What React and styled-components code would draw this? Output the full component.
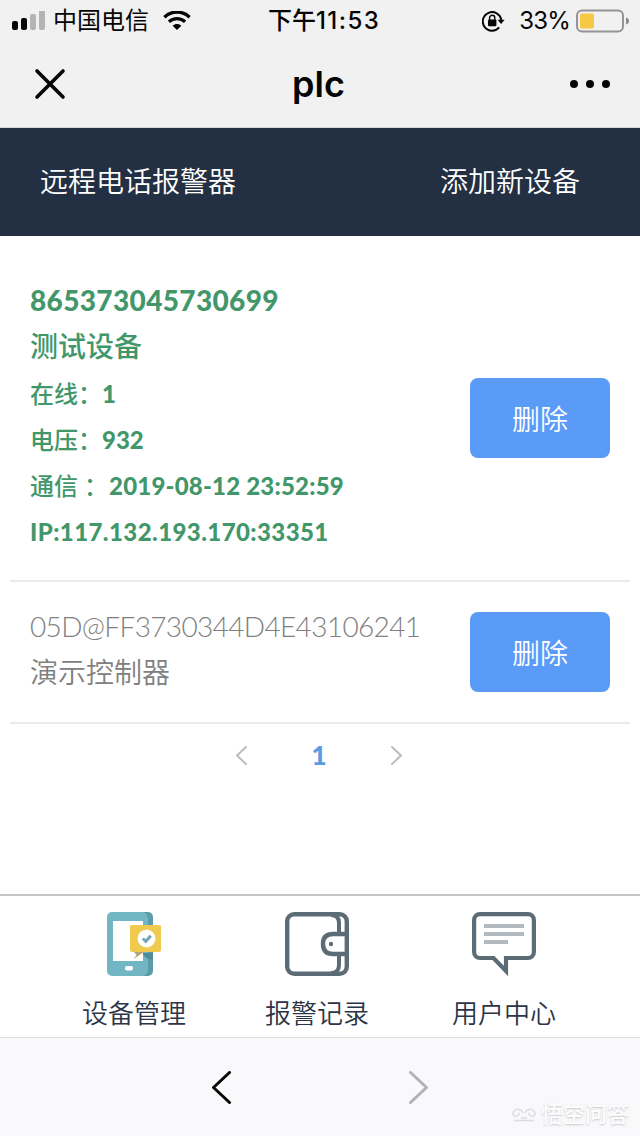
import React from 'react';
import styled, { createGlobalStyle } from 'styled-components'

const GlobalStyle = createGlobalStyle`
*{
  box-sizing: border-box;
}
body{
  margin: 0;
  background-color: #fff;
  font-family: Lato, "Noto Sans CJK SC", sans-serif;
}
`
const Page = styled.div`
width: 640px;
height: 1136px;
display: flex;
flex-direction: column;
background-color: #fff;
overflow: hidden;
position: relative;
`
const Header = styled.header`
height: 128px;
background-color: #f1f1f1;
border-bottom: 1px solid #d5d5d6;
color: #050505;
font-family: Inter, "Noto Sans CJK SC", sans-serif;
`
const StatusBar = styled.div`
height: 41px;
display: grid;
grid-template-columns: 256px 112px 1fr;
align-items: center;
padding: 1px 11px 0 12px;
font-size: 24px;
line-height: 40px;
`
const StatusSide = styled.div`
display: flex;
align-items: center;
justify-content: ${props => props.$end ? 'flex-end' : 'flex-start'};
`
const Carrier = styled.span`
margin: 0 14px 0 8px;
`
const Clock = styled.span`
font-weight: 500;
white-space: nowrap;
letter-spacing: ${props => props.$digits ? '1.4px' : '0'};
`
const Percent = styled.span`
margin: 0 6px 0 14px;
letter-spacing: -0.8px;
`
const TitleBar = styled.div`
height: 86px;
display: grid;
grid-template-columns: 1fr auto 1fr;
align-items: center;
padding: 0 29px 0 34px;
`
const Title = styled.h1`
margin: 0;
font-size: 36px;
font-weight: 600;
line-height: 86px;
padding-right: 8px;
`
const Dots = styled.svg`
justify-self: end;
`
const Nav = styled.nav`
height: 108px;
flex: none;
display: flex;
justify-content: space-between;
align-items: center;
padding: 0 60px 2px 40px;
background-color: #232f42;
color: #fff;
font-size: 28px;
font-weight: 350;
`
const NavItem = styled.span`
line-height: 40px;
`
const List = styled.main`
padding: 20px 10px 0;
flex: 1;
`
const Row = styled.div`
display: flex;
justify-content: space-between;
align-items: center;
height: ${props => props.$tall ? '326px' : '142px'};
padding: 0 20px;
border-bottom: 2px solid #ebebeb;
`
const Info = styled.div`
color: ${props => props.$online ? '#42976a' : '#808080'};
font-weight: ${props => props.$online ? 900 : 350};
padding-bottom: ${props => props.$online ? '4px' : '6px'};
`
const Line = styled.div`
height: 46px;
line-height: ${props => props.$small ? '48px' : props.$high ? '44px' : '46px'};
font-size: ${props => props.$small ? '24px' : '28px'};
letter-spacing: ${props => props.$track || '0'};
white-space: pre;
`
const Label = styled.span`
font-weight: 500;
letter-spacing: 0;
margin-right: ${props => props.$gap ? '1px' : '0'};
`
const DeleteButton = styled.button`
width: 140px;
height: 80px;
border: none;
border-radius: 8px;
background-color: #5b9bf8;
color: #fff;
font-family: inherit;
font-size: 28px;
font-weight: 350;
padding: 0 0 1px;
`
const Pager = styled.div`
display: flex;
justify-content: center;
align-items: center;
height: 62px;
padding-right: 2px;
gap: 64px;
`
const PageNumber = styled.span`
color: #5c9ae4;
font-size: 26px;
font-weight: 900;
`
const TabBar = styled.footer`
height: 143px;
flex: none;
display: grid;
grid-template-columns: 184px 182px 192px;
padding: 16px 0 0 42px;
border-top: 2px solid #c6c6c6;
`
const Tab = styled.div`
display: flex;
flex-direction: column;
align-items: center;
color: #2c3547;
font-size: 26px;
font-weight: 350;
line-height: 36px;
gap: 19px;
`
const BrowserBar = styled.div`
height: 99px;
flex: none;
display: flex;
justify-content: center;
align-items: center;
gap: 178px;
border-top: 1px solid #dededf;
background-color: #f9f9fb;
`
const Watermark = styled.div`
position: absolute;
right: 11px;
bottom: 6px;
display: flex;
align-items: center;
gap: 4px;
color: #fdfdfe;
font-size: 22px;
line-height: 32px;
font-weight: 500;
text-shadow: 0 1px 2px #c8c8cb;
`

const Chevron = ({ width, height, stroke, color, right }) => (
  <svg width={width} height={height} viewBox={`0 0 ${width} ${height}`} fill="none" stroke={color} strokeWidth={stroke} strokeLinecap="round" strokeLinejoin="round">
    <path d={right
      ? `M${stroke / 2} ${stroke / 2}L${width - stroke / 2} ${height / 2}L${stroke / 2} ${height - stroke / 2}`
      : `M${width - stroke / 2} ${stroke / 2}L${stroke / 2} ${height / 2}L${width - stroke / 2} ${height - stroke / 2}`} />
  </svg>
)

const SignalIcon = () => (
  <svg width="33" height="20" viewBox="0 0 33 20">
    <rect x="0" y="10" width="6" height="9" rx="2" fill="#050505" />
    <rect x="9" y="7" width="6" height="12" rx="2" fill="#050505" />
    <rect x="18" y="3" width="6" height="16" rx="2" fill="#b4b4b4" />
    <rect x="27" y="-1" width="6" height="20" rx="2" fill="#b4b4b4" />
  </svg>
)

const WifiIcon = () => (
  <svg width="28" height="20" viewBox="0 1 28 20">
    <path d="M1.4 7.2C8.6 .4 19.4 .4 26.6 7.2" fill="none" stroke="#050505" strokeWidth="3.4" />
    <path d="M5.9 11.7C10.5 7.5 17.5 7.5 22.1 11.7" fill="none" stroke="#050505" strokeWidth="3.2" />
    <path d="M9.6 15.8C12.2 13.4 15.8 13.4 18.4 15.8L14 20Z" fill="#050505" />
  </svg>
)

const LockIcon = () => (
  <svg width="23" height="22" viewBox="0 0 23 22">
    <path d="M17.2 17.4A9.300 9.300 0 1 1 19.300 10" fill="none" stroke="#050505" strokeWidth="1.900" />
    <path d="M15.6 9.8H22.6L19.1 14Z" fill="#050505" />
    <rect x="6" y="9.4" width="8.4" height="6.8" rx="1" fill="#050505" />
    <path d="M7.6 10V7.8A2.6 2.6 0 0 1 12.8 7.8V10" fill="none" stroke="#050505" strokeWidth="1.4" />
  </svg>
)

const BatteryIcon = () => (
  <svg width="53" height="24" viewBox="0 0 53 24">
    <rect x="1" y="1.5" width="46" height="21" rx="5" fill="none" stroke="#949494" strokeWidth="2" />
    <rect x="4" y="4.5" width="14" height="15" rx="1.5" fill="#f6c844" />
    <path d="M50 8.5C52 9 53 10.2 53 12S52 15 50 15.5Z" fill="#8c8c8c" />
  </svg>
)

const DeviceIcon = () => (
  <svg width="64" height="64" viewBox="0 0 64 64">
    <path d="M40 0H46A5 5 0 0 1 51 5V59A5 5 0 0 1 46 64H40Z" fill="#5b9caa" />
    <path d="M10 0H40Q46 1 46 7V57Q46 63 40 64H10A5 5 0 0 1 5 59V5A5 5 0 0 1 10 0Z" fill="#72b6c3" />
    <rect x="11" y="9" width="30" height="40" fill="#fff" />
    <path d="M41 41H51V48Q44 47 41 43Z" fill="#4f8b99" />
    <rect x="23" y="54" width="8" height="4.4" rx="2" fill="#fff" />
    <path d="M32 40L34.500 43L31.500 47L42 40Z" fill="#b0a77e" />
    <rect x="28" y="13" width="31" height="27" rx="2" fill="#efca4e" />
    <circle cx="44.500" cy="26.500" r="9" fill="#fff" />
    <path d="M40.800 26.500L43.800 29.300L48.800 23.800" fill="none" stroke="#72a5ba" strokeWidth="3" />
  </svg>
)

const WalletIcon = () => (
  <svg width="64" height="64" viewBox="0 0 64 64" fill="none" stroke="#5b6c77" strokeWidth="4">
    <rect x="2.200" y="2.200" width="59.600" height="59.600" rx="7" strokeWidth="4.400" />
    <path d="M46 3Q54 3 54 11V22M54 42V53Q54 61 46 61" />
    <path d="M62 22H48Q38 22 38 32Q38 42 48 42H62" strokeWidth="4.400" />
    <circle cx="46" cy="32" r="2.200" fill="#5b6c77" stroke="none" />
  </svg>
)

const MessageIcon = () => (
  <svg width="64" height="64" viewBox="0 0 64 64" fill="none">
    <path d="M8 2.100H56A6 6 0 0 1 61.900 8V40A6 6 0 0 1 56 46H34V59L21.500 46H8A6 6 0 0 1 2.100 40V8A6 6 0 0 1 8 2.100Z" stroke="#5b6c77" strokeWidth="4.200" />
    <path d="M12 14H52M12 22H52M12 30H36" stroke="#b1bac0" strokeWidth="4" />
  </svg>
)

const DeviceRow = ({ online, children }) => {

  return (
    <Row $tall={online}>
      <Info $online={online}>{children}</Info>
      <DeleteButton>删除</DeleteButton>
    </Row>
  )
}

const App = () => {
  return (
    <Page>
      <GlobalStyle />
      <Header>
        <StatusBar>
          <StatusSide>
            <SignalIcon />
            <Carrier>中国电信</Carrier>
            <WifiIcon />
          </StatusSide>
          <Clock>下午<Clock $digits>11:53</Clock></Clock>
          <StatusSide $end>
            <LockIcon />
            <Percent>33%</Percent>
            <BatteryIcon />
          </StatusSide>
        </StatusBar>
        <TitleBar>
          <svg width="32" height="32" viewBox="0 0 32 32" stroke="#050505" strokeWidth="3.6" strokeLinecap="round">
            <path d="M3 3L29 29M29 3L3 29" />
          </svg>
          <Title>plc</Title>
          <Dots width="42" height="10" viewBox="0 0 42 10" fill="#050505">
            <circle cx="5" cy="5" r="4" />
            <circle cx="21" cy="5" r="4" />
            <circle cx="37" cy="5" r="4" />
          </Dots>
        </TitleBar>
      </Header>
      <Nav>
        <NavItem>远程电话报警器</NavItem>
        <NavItem>添加新设备</NavItem>
      </Nav>
      <List>
        <DeviceRow online>
          <Line $high $track="0.35px">865373045730699</Line>
          <Line $high><Label>测试设备</Label></Line>
          <Line $small><Label>在线：</Label>1</Line>
          <Line $small><Label>电压：</Label>932</Line>
          <Line $small $track="0.2px"><Label $gap>通信 ：</Label>2019-08-12 23:52:59</Line>
          <Line $small $track="0.42px">IP:117.132.193.170:33351</Line>
        </DeviceRow>
        <DeviceRow>
          <Line $track="-0.65px">05D@FF3730344D4E43106241</Line>
          <Line>演示控制器</Line>
        </DeviceRow>
        <Pager>
          <Chevron width={11} height={19} stroke={2} color="#bdbdbd" />
          <PageNumber>1</PageNumber>
          <Chevron width={11} height={19} stroke={2} color="#bdbdbd" right />
        </Pager>
      </List>
      <TabBar>
        <Tab>
          <DeviceIcon />
          设备管理
        </Tab>
        <Tab>
          <WalletIcon />
          报警记录
        </Tab>
        <Tab>
          <MessageIcon />
          用户中心
        </Tab>
      </TabBar>
      <BrowserBar>
        <Chevron width={19} height={33} stroke={3} color="#050505" />
        <Chevron width={19} height={33} stroke={3} color="#b2b2b4" right />
      </BrowserBar>
      <Watermark>
        <svg width="26" height="18" viewBox="0 0 26 18" fill="none" stroke="#dcdcdf" strokeWidth="1.500">
          <path d="M12 8C9 2 2 4 2 9C2 12 8 12 8 8M14 8C17 2 24 4 24 9C24 12 18 12 18 8M3 15.500H23M10 13H16" />
        </svg>
        悟空问答
      </Watermark>
    </Page>
  );
}

export default App;
